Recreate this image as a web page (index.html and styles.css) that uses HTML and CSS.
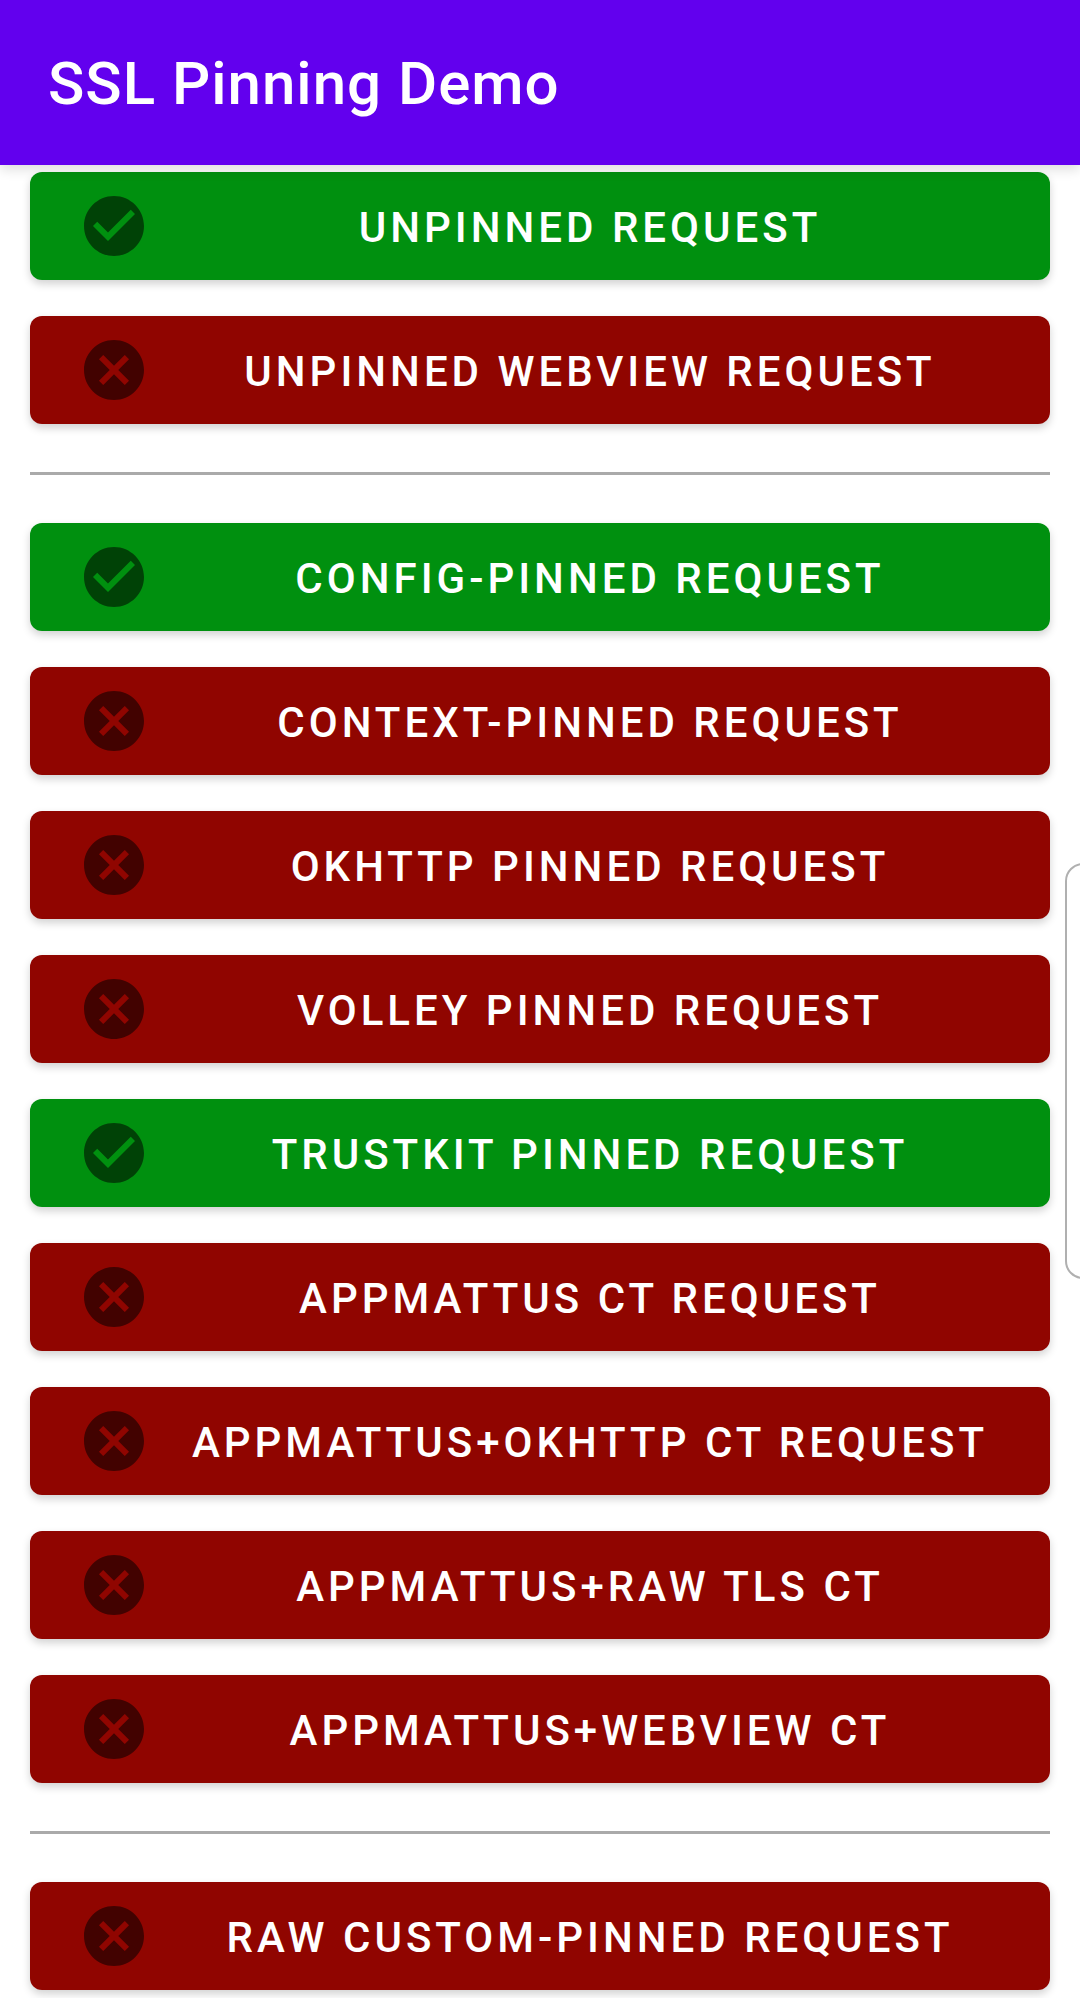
FILE: index.html
```html
<!DOCTYPE html>
<html lang="en">
<head>
<meta charset="utf-8">
<meta name="viewport" content="width=device-width, initial-scale=1">
<title>SSL Pinning Demo</title>
<link rel="stylesheet" href="styles.css">
</head>
<body>
<svg class="sprite" aria-hidden="true">
  <symbol id="check" viewBox="0 0 24 24"><path d="M12 2C6.48 2 2 6.48 2 12s4.48 10 10 10 10-4.48 10-10S17.52 2 12 2zm-2 15l-5-5 1.41-1.41L10 14.17l7.59-7.59L19 8l-9 9z"/></symbol>
  <symbol id="cancel" viewBox="0 0 24 24"><path d="M12 2C6.47 2 2 6.47 2 12s4.47 10 10 10 10-4.47 10-10S17.53 2 12 2zm5 13.59L15.59 17 12 13.41 8.41 17 7 15.59 10.59 12 7 8.41 8.41 7 12 10.59 15.59 7 17 8.41 13.41 12 17 15.59z"/></symbol>
</svg>
<header class="app-bar"><h1 class="title">SSL Pinning Demo</h1></header>
<main class="content">
  <section class="group">
    <button type="button" class="request success"><svg class="icon"><use href="#check"/></svg><span class="label">UNPINNED REQUEST</span></button>
    <button type="button" class="request failure"><svg class="icon"><use href="#cancel"/></svg><span class="label">UNPINNED WEBVIEW REQUEST</span></button>
  </section>
  <hr class="divider">
  <section class="group">
    <button type="button" class="request success"><svg class="icon"><use href="#check"/></svg><span class="label">CONFIG-PINNED REQUEST</span></button>
    <button type="button" class="request failure"><svg class="icon"><use href="#cancel"/></svg><span class="label">CONTEXT-PINNED REQUEST</span></button>
    <button type="button" class="request failure"><svg class="icon"><use href="#cancel"/></svg><span class="label">OKHTTP PINNED REQUEST</span></button>
    <button type="button" class="request failure"><svg class="icon"><use href="#cancel"/></svg><span class="label">VOLLEY PINNED REQUEST</span></button>
    <button type="button" class="request success"><svg class="icon"><use href="#check"/></svg><span class="label">TRUSTKIT PINNED REQUEST</span></button>
    <button type="button" class="request failure"><svg class="icon"><use href="#cancel"/></svg><span class="label">APPMATTUS CT REQUEST</span></button>
    <button type="button" class="request failure"><svg class="icon"><use href="#cancel"/></svg><span class="label">APPMATTUS+OKHTTP CT REQUEST</span></button>
    <button type="button" class="request failure"><svg class="icon"><use href="#cancel"/></svg><span class="label">APPMATTUS+RAW TLS CT</span></button>
    <button type="button" class="request failure"><svg class="icon"><use href="#cancel"/></svg><span class="label">APPMATTUS+WEBVIEW CT</span></button>
  </section>
  <hr class="divider">
  <section class="group">
    <button type="button" class="request failure"><svg class="icon"><use href="#cancel"/></svg><span class="label">RAW CUSTOM-PINNED REQUEST</span></button>
  </section>
</main>
<aside class="edge-panel" aria-hidden="true"><div class="edge-handle"></div></aside>
</body>
</html>
```

FILE: styles.css
```css
* {
  box-sizing: border-box;
}

body {
  margin: 0;
  background: #fff;
  font-family: Roboto, "Noto Sans", sans-serif;
  font-weight: 500;
}

.sprite {
  display: none;
}

.app-bar {
  position: relative;
  z-index: 1;
  padding: 48px 48px 45px;
  background: #6200ee;
  box-shadow: 0 4px 12px rgba(0, 0, 0, 0.14);
}

.title {
  margin: 0;
  color: #fff;
  font-size: 60px;
  font-weight: 500;
  line-height: 72px;
  letter-spacing: 1px;
}

.content {
  display: flex;
  flex-direction: column;
  gap: 48px;
  padding: 7px 30px 8px;
}

.group {
  display: flex;
  flex-direction: column;
  gap: 36px;
}

.request {
  display: flex;
  align-items: center;
  gap: 24px;
  width: 100%;
  min-height: 108px;
  padding: 18px 48px;
  border: 0;
  border-radius: 12px;
  color: #fff;
  font: inherit;
  font-size: 42px;
  line-height: 50px;
  letter-spacing: 4px;
  text-align: center;
  box-shadow: 0 4px 8px rgba(0, 0, 0, 0.18);
}

.success {
  background: #00900f;
}

.failure {
  background: #900500;
}

.icon {
  flex: none;
  width: 72px;
  height: 72px;
  fill: rgba(0, 0, 0, 0.54);
}

/* The left padding balances the letter spacing after the last letter */
.label {
  flex: 1;
  padding: 4px 0 0 4px;
  white-space: nowrap;
}

.divider {
  width: 100%;
  height: 3px;
  margin: 0;
  border: 0;
  background: #aaa;
}

/* System edge panel peeking in over the right side of the screen */
.edge-panel {
  position: absolute;
  top: 863px;
  right: 0;
  width: 15px;
  height: 416px;
  overflow: hidden;
}

.edge-handle {
  width: 60px;
  height: 100%;
  border: 2px solid #b0b0b0;
  border-radius: 18px;
  background: #fff;
}
```
